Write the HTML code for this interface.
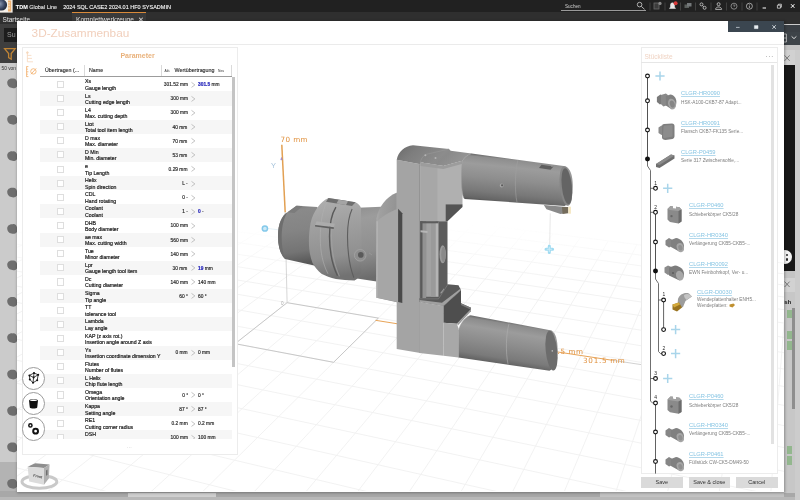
<!DOCTYPE html>
<html lang="de"><head><meta charset="utf-8"><title>TDM Global Line - 3D-Zusammenbau</title>
<style>
html,body{margin:0;padding:0;background:#cbcbcb;}
body{width:800px;height:500px;overflow:hidden;font-family:"Liberation Sans",sans-serif;}
#app{will-change:transform;position:relative;width:800px;height:500px;overflow:hidden;background:#cbcbcb;font-size:6px;color:#222;line-height:1;}
#app div,#app span{position:absolute;box-sizing:border-box;white-space:nowrap;line-height:1;}
#app b{font-weight:bold}
#app svg{position:absolute;overflow:visible}
#topbar{left:0;top:0;width:800px;height:11.8px;background:#212121;}
#tabbar{left:0;top:11.8px;width:800px;height:12.7px;background:#2f2f2f;}
#dlg{left:16.5px;top:21px;width:767px;height:470.5px;background:#fff;box-shadow:0 0 2.5px 0.5px rgba(0,0,0,.3);}
#dlgtitle{left:31.6px;top:27.9px;font-size:11.8px;color:#f1cfbc;}
#wctl{left:728px;top:21px;width:55.5px;height:11px;background:#3b4650;}
#view{left:16.5px;top:43.6px;width:767px;height:447.9px;overflow:hidden;background:#fff;border-top:0.7px solid #ebebeb;}
#lp{left:21.5px;top:46.8px;width:216px;height:408.6px;background:#fff;border:0.7px solid #ececec;}
#tbody{left:40px;top:77.3px;width:192px;height:362.1px;overflow:hidden;}
.row{left:0;width:192px;height:14.12px;-webkit-text-stroke:0.18px #222;}
.row.alt{background:#f6f6f6;}
.row .cb{left:17.3px;top:3.5px;width:7.2px;height:7.1px;border:0.7px solid #dedede;background:#fff;}
.row .arr{left:151.2px;top:4.4px;}
.row b{color:#1d1db8;-webkit-text-stroke:0.18px #1d1db8;}
#vsb{left:232px;top:77.3px;width:2.8px;height:290px;background:#c4c4c4;}
.rbtn{width:23.4px;height:23.4px;border-radius:50%;background:#fff;border:0.7px solid #9c9c9c;}
#rp{left:640.5px;top:47px;width:137px;height:427px;background:#fff;border:0.7px solid #ececec;}
.lnk{text-decoration:underline;text-decoration-thickness:0.5px;text-underline-offset:0.7px;text-decoration-color:#b4d9ec;}
.btn{top:477.2px;height:11.2px;background:#dadada;font-size:5.5px;color:#333;text-align:center;line-height:11px !important;}

</style></head><body>
<div id="app">
<div id="topbar"></div><div id="tabbar"></div><svg style="left:0;top:0" width="13" height="13" viewBox="0 0 13 13"><defs><radialGradient id="glb" cx="0.35" cy="0.4" r="0.7"><stop offset="0" stop-color="#8a97b0"/><stop offset="0.6" stop-color="#3c4864"/><stop offset="1" stop-color="#1c2434"/></radialGradient><clipPath id="lgc"><rect x="0" y="0" width="12.600" height="12.600"/></clipPath></defs><rect x="0" y="0" width="12.600" height="12.600" fill="#f6f1ea"/><g clip-path="url(#lgc)"><circle cx="1.500" cy="5" r="5.600" fill="url(#glb)"/></g><rect x="8" y="0.500" width="3.200" height="11" fill="#eeb070"/><path d="M9 2v1.600M9 4.600v1.600M9 7.200v2" stroke="#f8e0c0" stroke-width="1.400"/></svg><div style="top:4.60px;font-size:5.5px;color:#fff;left:15.80px;-webkit-text-stroke:0.12px #e8e8e8;"><b>TDM</b> <span style="position:static;color:#ddd">Global Line</span>&nbsp;&nbsp;&nbsp;&nbsp;2024 SQL CASE2 2024.01 HF0 SYSADMIN</div><div style="left:72px;top:12.2px;width:74px;height:9px;background:#3a3a3a;border-top:1px solid #d98a3a"></div><div style="top:17.40px;font-size:6.5px;color:#e4e4e4;left:2.60px;">Startseite</div><div style="top:17.40px;font-size:6.6px;color:#e4e4e4;left:76.00px;">Komplettwerkzeuge&nbsp;&nbsp;✕</div><div style="top:4.80px;font-size:4.6px;color:#cfcfcf;left:565.00px;">Suchen</div><div style="left:561px;top:10.2px;width:85px;height:0.7px;background:#9a9a9a"></div><svg style="left:0;top:0" width="800" height="13" viewBox="0 0 800 13" fill="none" stroke="#cfcfcf" stroke-width="0.8">
<circle cx="639.600" cy="4.600" r="2.300"/><path d="M641.300 6.400 L644.600 9.400"/>
<g stroke="#555" stroke-width="0.6"><path d="M650 2.5v8M665 2.5v8M680.5 2.5v8M695.5 2.5v8M711 2.5v8M726.5 2.5v8M742 2.5v8M757 2.5v8"/></g>
<rect x="654" y="3" width="5" height="6" fill="#3c3c3c" stroke="#6a6a6a"/><circle cx="660" cy="3.400" r="1.600" fill="#8a8a8a" stroke="none"/>
<path d="M669.5 8.5h6l-1-1.5v-2.2a2 2 0 0 0-4 0v2.2z" fill="#e8e8e8" stroke="#e8e8e8" stroke-width="0.5"/><circle cx="675.6" cy="3.2" r="2" fill="#d83a3a" stroke="none"/>
<rect x="684.500" y="4.500" width="4.500" height="3.500" fill="#5a5f5c" stroke="none"/><rect x="687" y="3" width="4.500" height="3.500" fill="#74787a" stroke="none"/>
<circle cx="701.5" cy="4.4" r="1.5"/><circle cx="704.6" cy="7.8" r="1.5"/><path d="M702.4 5.5l1.3 1.3"/>
<circle cx="718.6" cy="4.2" r="1.5"/><path d="M715.6 9.4c0-3.2 6-3.2 6 0z"/>
<circle cx="734" cy="6.2" r="3" stroke="#999"/><path d="M734 4.4v2l1.3-1" stroke="#999"/>
<circle cx="749.4" cy="6.2" r="3" stroke="#bbb"/><path d="M749.4 5.6v2.4M749.4 4.2v.6" stroke="#bbb"/>
<path d="M762.6 8h3.4" stroke="#fff" stroke-width="1"/>
<path d="M777.4 5.2h3v3h-3zM778.4 5.2v-1h3v3h-1" stroke="#eee" stroke-width="0.7"/>
<path d="M791 4.2l3.4 3.6M794.4 4.2l-3.4 3.6" stroke="#fff" stroke-width="1"/>
</svg><div style="left:0;top:24px;width:20px;height:38.5px;background:#3e3e3e"></div><div style="left:4px;top:28px;width:16px;height:13.5px;background:#1d1d1d"></div><div style="top:31.40px;font-size:7.0px;color:#9a9a9a;left:7.00px;">Su</div><svg style="left:0;top:0" width="20" height="70" viewBox="0 0 20 70"><path d="M4.6 48.6h10.6l-4 5v5.6l-2.6-1.6v-4z" fill="none" stroke="#c08434" stroke-width="1.300"/></svg><div style="top:67.00px;font-size:4.8px;color:#333;left:1.50px;">50 von</div><div style="left:0;top:462.4px;width:20px;height:38px;background:#b3b3b3"></div><div style="left:0;top:491px;width:800px;height:6px;background:#a8a8a8"></div><div style="left:0;top:496.8px;width:800px;height:4px;background:#b8b8b8"></div><svg style="left:0;top:0" width="20" height="500" viewBox="0 0 20 500"><path d="M7.2 82.8c0-3 3-4.6 5.4-4.2c2.4-.6 4 1.2 4.4 3.2v4.6c-1.4 2-4 2.2-5.6 1.4c-2.6-.4-4.2-2.4-4.2-5z" fill="#6e6e6e"/><path d="M7.2 119.2c0-3 3-4.6 5.4-4.2c2.4-.6 4 1.2 4.4 3.2v4.6c-1.4 2-4 2.2-5.6 1.4c-2.6-.4-4.2-2.4-4.2-5z" fill="#6e6e6e"/><path d="M7.2 155.6c0-3 3-4.6 5.4-4.2c2.4-.6 4 1.2 4.4 3.2v4.6c-1.4 2-4 2.2-5.6 1.4c-2.6-.4-4.2-2.4-4.2-5z" fill="#6e6e6e"/><path d="M7.2 192.0c0-3 3-4.6 5.4-4.2c2.4-.6 4 1.2 4.4 3.2v4.6c-1.4 2-4 2.2-5.6 1.4c-2.6-.4-4.2-2.4-4.2-5z" fill="#6e6e6e"/><path d="M7.2 228.4c0-3 3-4.6 5.4-4.2c2.4-.6 4 1.2 4.4 3.2v4.6c-1.4 2-4 2.2-5.6 1.4c-2.6-.4-4.2-2.4-4.2-5z" fill="#6e6e6e"/><path d="M7.2 264.8c0-3 3-4.6 5.4-4.2c2.4-.6 4 1.2 4.4 3.2v4.6c-1.4 2-4 2.2-5.6 1.4c-2.6-.4-4.2-2.4-4.2-5z" fill="#6e6e6e"/><path d="M7.2 301.2c0-3 3-4.6 5.4-4.2c2.4-.6 4 1.2 4.4 3.2v4.6c-1.4 2-4 2.2-5.6 1.4c-2.6-.4-4.2-2.4-4.2-5z" fill="#6e6e6e"/><path d="M7.2 337.6c0-3 3-4.6 5.4-4.2c2.4-.6 4 1.2 4.4 3.2v4.6c-1.4 2-4 2.2-5.6 1.4c-2.6-.4-4.2-2.4-4.2-5z" fill="#6e6e6e"/><path d="M7.2 374.0c0-3 3-4.6 5.4-4.2c2.4-.6 4 1.2 4.4 3.2v4.6c-1.4 2-4 2.2-5.6 1.4c-2.6-.4-4.2-2.4-4.2-5z" fill="#6e6e6e"/><path d="M7.2 410.4c0-3 3-4.6 5.4-4.2c2.4-.6 4 1.2 4.4 3.2v4.6c-1.4 2-4 2.2-5.6 1.4c-2.6-.4-4.2-2.4-4.2-5z" fill="#6e6e6e"/><path d="M7.2 446.8c0-3 3-4.6 5.4-4.2c2.4-.6 4 1.2 4.4 3.2v4.6c-1.4 2-4 2.2-5.6 1.4c-2.6-.4-4.2-2.4-4.2-5z" fill="#6e6e6e"/><path d="M7.2 483.2c0-3 3-4.6 5.4-4.2c2.4-.6 4 1.2 4.4 3.2v4.6c-1.4 2-4 2.2-5.6 1.4c-2.6-.4-4.2-2.4-4.2-5z" fill="#6e6e6e"/></svg><div style="left:128px;top:493px;width:88px;height:3.5px;background:#cfcfcf"></div><div style="left:600px;top:491.5px;width:184px;height:5.3px;background:#c2c2c2"></div><div style="left:780px;top:24.5px;width:20px;height:21px;background:#3a3f44"></div><div style="left:780px;top:31.5px;width:20px;height:14px;background:#3d4348"></div><div style="left:780px;top:45.4px;width:20px;height:4.4px;background:#c4c4c4"></div><div style="left:780px;top:49.6px;width:20px;height:15.2px;background:#d1d1d1"></div><div style="left:780px;top:64.6px;width:15.3px;height:206.8px;background:#171717"></div><div style="left:795.3px;top:49.6px;width:4.7px;height:451px;background:#cccccc"></div><div style="left:780px;top:271.4px;width:15.3px;height:6.8px;background:#c4c4c4"></div><div style="left:780px;top:278px;width:15.3px;height:13.5px;background:#d2d2d2"></div><div style="left:780px;top:291.5px;width:15.3px;height:201px;background:#c7c7c7"></div><div style="left:778px;top:250px;width:14px;height:14px;border-radius:50%;background:#f4f4f4"></div><div style="left:785.6px;top:253.6px;width:2.4px;height:2.4px;border-radius:50%;background:#2a2a2a"></div><div style="left:785.6px;top:258.2px;width:2.4px;height:2.4px;border-radius:50%;background:#2a2a2a"></div><div style="top:300.00px;font-size:5.6px;color:#111;left:783.00px;font-weight:bold;">ish</div><div style="left:792.4px;top:308px;width:2.8px;height:101px;background:#8e8e8e"></div><div style="left:786.6px;top:309.8px;width:5px;height:8.6px;background:#93b78e"></div><div style="left:786.6px;top:330.7px;width:5px;height:8.6px;background:#93b78e"></div><div style="left:786.6px;top:341px;width:5px;height:8.6px;background:#93b78e"></div><div style="left:786.6px;top:445.6px;width:5px;height:8.6px;background:#93b78e"></div><div style="left:786.6px;top:456px;width:5px;height:8.6px;background:#93b78e"></div><svg style="left:0;top:0" width="800" height="500" viewBox="0 0 800 500" fill="none">
<path d="M784.6 55.4l5 5.4M789.6 55.4l-5 5.4" stroke="#555" stroke-width="0.700"/>
<path d="M784.6 281.6l5 5.4M789.6 281.6l-5 5.4" stroke="#555" stroke-width="0.7"/>
<path d="M791.6 36.4l2.4 2.2l2.4-2.2" stroke="#e6e6e6" stroke-width="0.9"/>
<path d="M783 34h3.4v8H783M783 38h3.4" stroke="#d0d0d0" stroke-width="0.8"/>
</svg>
<div id="dlg"></div>
<div id="dlgtitle">3D-Zusammenbau</div>
<div id="wctl"></div>
<svg style="left:0;top:0" width="800" height="500" viewBox="0 0 800 500" fill="none">
<path d="M736 27.400h3.600" stroke="#c8d0d8" stroke-width="0.800"/>
<path d="M754.400 25.600h3.600v3h-3.600z" fill="#e8eef2" stroke="#e8eef2" stroke-width="0.500"/>
<path d="M772.400 25.200l3.400 3.600M775.800 25.200l-3.400 3.600" stroke="#e8eef2" stroke-width="0.800"/>
</svg>
<div id="view">
<svg style="left:0;top:0.4px" width="767" height="447.5" viewBox="16.5 44.7 767 447.5" fill="none"><defs>
<linearGradient id="fade" x1="0" y1="0" x2="0" y2="500" gradientUnits="userSpaceOnUse"><stop offset="0.45" stop-color="#000"/><stop offset="0.56" stop-color="#fff"/></linearGradient>
<mask id="gm" maskUnits="userSpaceOnUse" x="0" y="0" width="800" height="500"><rect x="0" y="0" width="800" height="500" fill="url(#fade)"/></mask>
<linearGradient id="cylU" gradientUnits="userSpaceOnUse" x1="517.3" y1="157.5" x2="512.7" y2="203.5"><stop offset="0" stop-color="#606060"/><stop offset="0.06" stop-color="#8e8e8e"/><stop offset="0.22" stop-color="#9c9c9c"/><stop offset="0.5" stop-color="#8e8e8e"/><stop offset="0.8" stop-color="#787878"/><stop offset="0.95" stop-color="#666"/><stop offset="1" stop-color="#545454"/></linearGradient>
<linearGradient id="cylL" gradientUnits="userSpaceOnUse" x1="508.6" y1="320.5" x2="501.4" y2="364.5"><stop offset="0" stop-color="#5e5e5e"/><stop offset="0.08" stop-color="#8c8c8c"/><stop offset="0.25" stop-color="#9c9c9c"/><stop offset="0.55" stop-color="#8c8c8c"/><stop offset="0.85" stop-color="#7a7a7a"/><stop offset="1" stop-color="#606060"/></linearGradient>
<linearGradient id="tap" x1="0" y1="0" x2="0.1" y2="1"><stop offset="0" stop-color="#707070"/><stop offset="0.12" stop-color="#8a8a8a"/><stop offset="0.45" stop-color="#848484"/><stop offset="0.8" stop-color="#747474"/><stop offset="1" stop-color="#585858"/></linearGradient>
<linearGradient id="fl" x1="0" y1="0" x2="0.1" y2="1"><stop offset="0" stop-color="#b0b0b0"/><stop offset="0.3" stop-color="#a2a2a2"/><stop offset="0.75" stop-color="#909090"/><stop offset="1" stop-color="#727272"/></linearGradient>
<linearGradient id="b2" x1="0" y1="0" x2="0.1" y2="1"><stop offset="0" stop-color="#8e8e8e"/><stop offset="0.2" stop-color="#9c9c9c"/><stop offset="0.65" stop-color="#8e8e8e"/><stop offset="1" stop-color="#6c6c6c"/></linearGradient>
<linearGradient id="topf" x1="0" y1="0" x2="1" y2="0.3"><stop offset="0" stop-color="#6a6a6a"/><stop offset="0.3" stop-color="#7e7e7e"/><stop offset="0.68" stop-color="#8c8c8c"/><stop offset="0.74" stop-color="#8a8a8a"/><stop offset="1" stop-color="#949494"/></linearGradient>
<linearGradient id="rpl" x1="0" y1="0" x2="1" y2="0.6"><stop offset="0" stop-color="#b4b4b4"/><stop offset="0.2" stop-color="#a0a0a0"/><stop offset="1" stop-color="#8e8e8e"/></linearGradient>
</defs><g mask="url(#gm)"><path d="M99.0 175.8L1228.7 319.6M83.8 182.0L1241.9 333.6M67.9 188.4L1255.8 348.4M51.3 195.2L1270.7 364.3M34.0 202.3L1286.7 381.3M15.8 209.6L1303.9 399.5M-3.2 217.4L1322.3 419.1M-23.1 225.5L1342.2 440.3M-44.0 234.0L1363.7 463.2M-65.9 242.9L1387.1 488.0M-89.1 252.4L1412.6 515.1M-113.4 262.3L1440.5 544.7M-139.1 272.7L1471.1 577.3M-166.3 283.8L1504.8 613.2M-195.1 295.5L1542.3 653.0M-225.5 307.9L1584.1 697.4M-257.9 321.1L1630.9 747.2M-292.4 335.1L1683.9 803.5M-329.1 350.1L1744.3 867.7M-368.3 366.1L1813.8 941.6M-410.4 383.2L1894.5 1027.3M-455.5 401.5L1989.4 1128.2M99.0 175.8L-455.5 401.5M118.1 178.2L-429.6 409.2M137.5 180.7L-403.0 417.1M157.2 183.2L-375.6 425.3M177.3 185.8L-347.3 433.7M197.8 188.4L-318.2 442.3M218.5 191.0L-288.1 451.3M239.7 193.7L-257.0 460.5M261.2 196.4L-224.9 470.1M283.1 199.2L-191.8 479.9M305.4 202.1L-157.5 490.1M328.1 204.9L-122.0 500.7M351.2 207.9L-85.2 511.6M374.7 210.9L-47.1 522.9M398.7 213.9L-7.7 534.6M423.1 217.1L33.3 546.8M448.0 220.2L75.8 559.5M473.4 223.4L119.9 572.6M499.2 226.7L165.8 586.2M525.6 230.1L213.6 600.4M552.5 233.5L263.3 615.2M579.9 237.0L315.1 630.6M607.8 240.6L369.2 646.7M636.4 244.2L425.6 663.4M665.5 247.9L484.5 680.9M695.2 251.7L546.2 699.3M725.6 255.6L610.7 718.5M756.6 259.5L678.4 738.6M788.2 263.5L749.4 759.7M820.6 267.7L824.0 781.8M853.6 271.9L902.4 805.2M887.4 276.2L985.1 829.7M921.9 280.6L1072.2 855.6M957.2 285.1L1164.3 883.0M993.4 289.7L1261.7 911.9M1030.3 294.4L1364.9 942.6M1068.1 299.2L1474.4 975.2M1106.9 304.1L1590.9 1009.8M1146.5 309.2L1715.1 1046.7M1187.1 314.3L1847.6 1086.1M1228.7 319.6L1989.4 1128.2" stroke="#f1f1f1" stroke-width="0.9"/></g><path d="M286.6 302.4L377.9 317.8L333.1 362.0L234.6 343.4Z" stroke="#b4b4b4" stroke-width="0.7"/><path d="M284.5 212L286.6 302.4" stroke="#c4c4c4" stroke-width="0.7"/><path d="M281.300 144.500L284.700 212" stroke="#e2a052" stroke-width="1.500"/><path d="M375 320L397 323.5" stroke="#e8a458" stroke-width="1"/><path d="M556 351.5L612 360" stroke="#e8a458" stroke-width="1"/><path d="M612 360L642 364.5" stroke="#bdbdbd" stroke-width="0.7"/><path d="M549.800 213L549.200 244" stroke="#dcdcdc" stroke-width="0.700"/><path d="M266 228L278 229.5" stroke="#dcecf4" stroke-width="0.7"/><path d="M545.5 249h6.600M548.8 245.7v6.600" stroke="#9edaf1" stroke-width="3" stroke-linecap="round"/><path d="M546.1999999999999 249h5.200M548.8 246.4v5.200" stroke="#c9ecf8" stroke-width="1.100"/><circle cx="264.400" cy="228.200" r="2.600" fill="#cdeaf7" stroke="#84c9ea" stroke-width="1.500"/><path d="M280.200 159.500l0.800 -2.400l0.800 2.400z" fill="#9a86c8" stroke="#9a86c8" stroke-width="0.500"/><text x="280" y="141.8" font-size="7.2" fill="#e0903c" font-family="DejaVu Sans, sans-serif" letter-spacing="0.4">70 mm</text><text x="270.5" y="168" font-size="7.400" fill="#a4c2da" font-family="Liberation Sans, sans-serif">Y</text><text x="280.5" y="305" font-size="4.6" fill="#aaa" font-family="Liberation Sans, sans-serif">0</text><text x="557" y="354.2" font-size="7.2" fill="#e0903c" font-family="DejaVu Sans, sans-serif" letter-spacing="0.6">.5 mm</text><text x="582.6" y="362.5" font-size="7.2" fill="#e0903c" font-family="DejaVu Sans, sans-serif" letter-spacing="0.7">301.5 mm</text>
<g id="model">
<!-- left taper -->
<path d="M287 212 L296 205.400 L317 206.600 L317 266 L284.500 258.800 C280 254 277.300 246 277.500 235 C277.700 224 281 215.500 287 212Z" fill="url(#tap)"/>
<path d="M287 212 C281 215.500 277.700 224 277.500 235 C277.300 246 280 254 284.500 258.800 C282 251 281 243 281.200 235 C281.400 226 283.500 217 287 212Z" fill="#6e6e6e"/>
<path d="M287 212 L296 205.400 L302 205.800 L294 212.600Z" fill="#7c7c7c"/>
<!-- body 2 behind flange -->
<path d="M345 208 L381 206.400 L381 282 L345 276.500Z" fill="url(#b2)"/>
<!-- flange -->
<path d="M328 197.800 L355 202 C358 203.600 360 205.500 360.500 208 L361 270 C360 275 357.600 278.600 354 280.200 L344.400 279.700 L335.400 278.800 C330 277.500 325 275.500 321 273.400 C317 270 314 266.500 312 262.600 C309.500 256 308.400 249 308.400 241 C308.400 235 309 229 310 223 C311.500 216.500 314 211 317.400 206.800 C320 203 324 199.500 328 197.800Z" fill="url(#fl)"/>
<path d="M328 197.800 L355 202 L351.500 205.600 L325.500 201.400Z" fill="#6e6e6e"/>
<path d="M338 199.400 L347.500 200.900 L345.500 204.700 L336 203.200Z" fill="#a4a4a4"/>
<path d="M326.500 201.600 C322 210 319.800 222 319.800 238 C319.800 252 322.500 264 327.500 273.500" stroke="#b0b0b0" stroke-width="0.600" fill="none"/>
<path d="M335.400 206.800 C331 214 329 224 329 236 C329 250 331.500 264 337 275.500" stroke="#5a5a5a" stroke-width="1.400" fill="none"/>
<path d="M337.400 207 C333 214 331 224 331 236 C331 250 333.500 264 339 276" stroke="#a8a8a8" stroke-width="0.600" fill="none"/>
<path d="M351.600 208.600 C348.500 215 347 224 347 236 C347 250 349 266 353.400 277.500" stroke="#5e5e5e" stroke-width="1.100" fill="none"/>
<path d="M314.700 224.600 L333.400 227 L334.400 223.400 L316 221Z" fill="#acacac"/>
<path d="M314.700 224.600 L333.400 227 L333.200 228.600 L314.500 226.200Z" fill="#606060"/>
<circle cx="359.700" cy="255" r="5.800" fill="#8e8e8e" stroke="#a4a4a4" stroke-width="0.800"/>
<circle cx="360.300" cy="254.600" r="2.800" fill="#5a5a5a"/>
<path d="M368.500 252.500l3 2.200" stroke="#a0a0a0" stroke-width="0.600"/>
<!-- back plate -->
<path d="M396.200 159.400 L419.800 163.900 L419.800 352.600 L396.200 348.800Z" fill="#a4a4a4"/>
<path d="M419.600 163.900 V352.600" stroke="#747474" stroke-width="0.800"/>
<!-- rounded flange plate -->
<path d="M376 218 C378 207 385.500 196.500 396 192.500 L396.400 192.500 L396.400 302 L376 297.500Z" fill="url(#rpl)"/>
<path d="M376.600 221 C380 217 390 211 397.600 208.500 L397.600 301.800 L376 297.500Z" fill="#a6a6a6"/>
<path d="M376.600 221 L376.300 297.500" stroke="#b8b8b8" stroke-width="1.200"/>
<path d="M397.600 208.500 L401.800 213 L401.800 302.600 L397.600 301.800Z" fill="#4a4a4a"/>
<!-- top dark surface -->
<path d="M396.200 159.400 C398 151 404 146 412.500 145 L448.500 148.700 L450.200 150.400 L471 153.200 Q464 156 462 160.500 L442.900 165.600 L421 162.200 L419.800 163.900Z" fill="url(#topf)"/>
<path d="M419.800 163.900 C420 159 422 155.500 426 154 L448.500 148.700" stroke="#999" stroke-width="0.600" fill="none"/>
<circle cx="424.900" cy="154.900" r="1" fill="#b4b4b4"/><circle cx="435" cy="157.600" r="1" fill="#b4b4b4"/>
<!-- front block upper arm -->
<path d="M420 162.200 L442.900 165.600 L462 160.500 L462 204 L445 204 L445 221 L420 221Z" fill="#b0b0b0"/>
<path d="M420 162.200 L437 164.700 L437 221 L420 221Z" fill="#a7a7a7"/>
<path d="M420 162.200 L442.900 165.600 L462 160.500 L462 163.500 L442.900 168.800 L420 165.600Z" fill="#9c9c9c"/>
<path d="M445 204 L462 204 L462 206.700 L447 221 L445 221Z" fill="#545454"/>
<!-- channel -->
<path d="M419.800 221 L447 221 L447 300 L419.800 300Z" fill="#5c5c5c"/>
<path d="M419.800 221 L422 221 L422 300 L419.800 300Z" fill="#5a5a5a"/>
<path d="M422 222 L425.600 222 L425.600 298 L422 298Z" fill="#929292"/>
<path d="M425.600 221 L435 221 L435 296.500 L425.600 296.500Z" fill="#a2a2a2"/>
<path d="M430.500 221 L435 221 L435 296.500 L430.500 296.500Z" fill="#9a9a9a"/>
<path d="M435 221.500 L438 221.500 L438 296.500 L435 296.500Z" fill="#b4b4b4"/>
<path d="M419.800 221 L438 221 L438 223 L419.800 223Z" fill="#5c5c5c"/>
<path d="M420 230 L427 230.600 L427 232.600 L420 232Z" fill="#b6b6b6"/>
<ellipse cx="442.200" cy="254" rx="3.200" ry="9" fill="#9c9c9c"/><ellipse cx="442.900" cy="254" rx="2.200" ry="7.600" fill="#8a8a8a"/>
<path d="M439.500 293 L443.500 288 L443.500 293.500Z" fill="#9a9a9a"/>
<!-- lower block -->
<path d="M419 298 L438 298 L447 284 L458 285 L460.500 290 L443 305.600 L419 301.600Z" fill="#595959"/>
<path d="M419 298.600 L438 298.600 L447 284.600" stroke="#888" stroke-width="0.600" fill="none"/>
<path d="M419 299.600 L441.500 302.400 L460.500 288 L460.500 290 L443 305.600 L419 301.600Z" fill="#a0a0a0"/>
<path d="M418.800 301.600 L443 305.600 L443 355.400 L418.800 352.600Z" fill="#a6a6a6"/>
<path d="M443 305.600 L460.500 290 L460.500 303 L470.500 307.500 L470.500 309 L456.400 323.500 L443 322.400Z" fill="#4e4e4e"/>
<path d="M460.500 303 L470.500 307.500 L470.500 309.400 L460.500 304.800Z" fill="#7a7a7a"/>
<path d="M456.400 323.500 L470.500 309 L470.500 311 L457.600 325Z" fill="#9a9a9a"/>
<path d="M443 322.400 L456.400 323.500 L458 328 L458 357.200 L443 355.400Z" fill="#a8a8a8"/>
<!-- upper cylinder -->
<path d="M471 153.200 L565 166 C570 168 572.500 176 572.200 186 C572 196 569 204 564 205.600 L464 198.600 C461.500 196 461 185 461 178 C461 170 461.500 163 462 160.500 Q464 156 471 153.200Z" fill="url(#cylU)"/>
<path d="M471 153.200 Q464 156 462 160.500 C461.500 163 461 170 461 178 C461 185 461.500 196 464 198.600" stroke="#9a9a9a" stroke-width="0.600" fill="none"/>
<ellipse cx="565.400" cy="185.800" rx="6.200" ry="19.800" fill="#858585" transform="rotate(-6 565.400 185.800)"/><ellipse cx="566.300" cy="185.900" rx="5" ry="18" fill="#646464" transform="rotate(-6 566.300 185.900)"/>
<path d="M517.500 159.600 C514.500 170 514 190 516.500 202" stroke="#a0a0a0" stroke-width="0.600"/>
<circle cx="501.200" cy="185.200" r="1.900" fill="#a6a6a6"/><circle cx="501.600" cy="185" r="1.100" fill="#5c5c5c"/>
<path d="M541 164.500 L553 166.200 L550 169.400 L538.500 167.800Z" fill="#5e5e5e"/><circle cx="551.500" cy="165.600" r="0.900" fill="#999"/>
<!-- insert holder -->
<path d="M543.300 204.800 L566 206.600 L566.500 212.400 L560 213.800 L546 209Z" fill="#8a8a8a"/>
<path d="M561.500 206.600 L567.800 206.800 L567.800 213 L562 213.800Z" fill="#746c5c"/>
<path d="M567.800 206.400 L570.400 206.400 L570.400 213.400 L567.800 213.400Z" fill="#f4e6c0"/>
<!-- lower cylinder -->
<path d="M470 315 L551 330.200 C555.500 333 557.400 341 557 351 C556.600 361 553.500 368.500 549 370.400 L458 357.200 L458 330 C460 323 464 317.500 470 315Z" fill="url(#cylL)"/>
<path d="M470 315 C464 317.500 460 323 458 330 L458 357" stroke="#9c9c9c" stroke-width="0.500" fill="none"/>
<ellipse cx="551" cy="350.400" rx="5.800" ry="20" fill="#6c6c6c" transform="rotate(-6 551 350.400)"/>
<path d="M508.500 323.500 C505.500 334 505 352 507.500 363.600" stroke="#b0b0b0" stroke-width="0.600"/>
<circle cx="551.800" cy="350.600" r="0.800" fill="#bbb"/>
</g>
</svg>
</div>
<div id="lp"></div>
<div style="top:52.20px;font-size:7.0px;color:#e9b27c;left:120.40px;font-weight:bold;">Parameter</div>
<svg style="left:0;top:0" width="800" height="500" viewBox="0 0 800 500" fill="none">
<g stroke="#f6d8bc" stroke-width="0.8"><path d="M27.4 52.4v9.4h5.6M27.4 55.4h4M27.4 58.4h4.6"/><circle cx="27.4" cy="52.6" r="0.9" fill="#f6d8bc"/></g>
<g stroke="#f2ad68" stroke-width="0.800"><path d="M26.6 66.4v10.4M26.6 66.6h1.8M26.6 69.2h1.2M26.6 71.8h1.8M26.6 74.2h1.2M26.6 76.6h1.8"/><circle cx="33.4" cy="71.4" r="2.7"/><path d="M31 74.2l5.2-5.8"/></g>
</svg>
<div style="left:40px;top:76.1px;width:192px;height:0.8px;background:#9c9c9c"></div><div style="left:84.3px;top:64.6px;width:0.6px;height:11.6px;background:#dadada"></div><div style="left:160.8px;top:64.6px;width:0.6px;height:11.6px;background:#dadada"></div><div style="left:231px;top:64.6px;width:0.6px;height:11.6px;background:#dadada"></div><div style="top:67.90px;font-size:5.3px;color:#222;left:45.00px;-webkit-text-stroke:0.12px #333;">Übertragen (...</div><div style="top:67.90px;font-size:5.3px;color:#222;left:89.00px;-webkit-text-stroke:0.12px #333;">Name</div><div style="top:70.30px;font-size:3.3px;color:#333;left:164.60px;">Akt.</div><div style="top:67.60px;font-size:5.35px;color:#222;left:174.50px;-webkit-text-stroke:0.12px #333;">Wertübertragung</div><div style="top:70.30px;font-size:3.3px;color:#333;left:218.00px;">Neu</div>
<div id="tbody">
<div class="row" style="top:0.00px"><span class="cb"></span><div style="top:2.10px;font-size:5.2px;color:#101010;left:45.00px;">Xs</div><div style="top:8.50px;font-size:5.2px;color:#101010;left:45.00px;">Gauge length</div><div style="top:4.90px;font-size:5.0px;color:#333;right:44.30px;transform:scaleX(0.97);transform-origin:100% 50%;">301.52 mm</div><svg class="arr" width="5" height="6" viewBox="0 0 5 6"><path d="M0.500 0.400L3.900 2.900L0.500 5.400" fill="none" stroke="#b4b4b4" stroke-width="0.800"/></svg><div style="top:4.90px;font-size:5.0px;color:#333;left:157.70px;transform:scaleX(0.97);transform-origin:0 50%;"><b>301.5</b> mm</div></div>
<div class="row alt" style="top:14.12px"><span class="cb"></span><div style="top:2.10px;font-size:5.2px;color:#101010;left:45.00px;">Ls</div><div style="top:8.50px;font-size:5.2px;color:#101010;left:45.00px;">Cutting edge length</div><div style="top:4.90px;font-size:5.0px;color:#333;right:44.30px;transform:scaleX(0.97);transform-origin:100% 50%;">300 mm</div><svg class="arr" width="5" height="6" viewBox="0 0 5 6"><path d="M0.500 0.400L3.900 2.900L0.500 5.400" fill="none" stroke="#b4b4b4" stroke-width="0.800"/></svg></div>
<div class="row" style="top:28.24px"><span class="cb"></span><div style="top:2.10px;font-size:5.2px;color:#101010;left:45.00px;">L4</div><div style="top:8.50px;font-size:5.2px;color:#101010;left:45.00px;">Max. cutting depth</div><div style="top:4.90px;font-size:5.0px;color:#333;right:44.30px;transform:scaleX(0.97);transform-origin:100% 50%;">300 mm</div><svg class="arr" width="5" height="6" viewBox="0 0 5 6"><path d="M0.500 0.400L3.900 2.900L0.500 5.400" fill="none" stroke="#b4b4b4" stroke-width="0.800"/></svg></div>
<div class="row alt" style="top:42.36px"><span class="cb"></span><div style="top:2.10px;font-size:5.2px;color:#101010;left:45.00px;">Ltot</div><div style="top:8.50px;font-size:5.2px;color:#101010;left:45.00px;">Total tool item length</div><div style="top:4.90px;font-size:5.0px;color:#333;right:44.30px;transform:scaleX(0.97);transform-origin:100% 50%;">40 mm</div><svg class="arr" width="5" height="6" viewBox="0 0 5 6"><path d="M0.500 0.400L3.900 2.900L0.500 5.400" fill="none" stroke="#b4b4b4" stroke-width="0.800"/></svg></div>
<div class="row" style="top:56.48px"><span class="cb"></span><div style="top:2.10px;font-size:5.2px;color:#101010;left:45.00px;">D max</div><div style="top:8.50px;font-size:5.2px;color:#101010;left:45.00px;">Max. diameter</div><div style="top:4.90px;font-size:5.0px;color:#333;right:44.30px;transform:scaleX(0.97);transform-origin:100% 50%;">70 mm</div><svg class="arr" width="5" height="6" viewBox="0 0 5 6"><path d="M0.500 0.400L3.900 2.900L0.500 5.400" fill="none" stroke="#b4b4b4" stroke-width="0.800"/></svg></div>
<div class="row alt" style="top:70.60px"><span class="cb"></span><div style="top:2.10px;font-size:5.2px;color:#101010;left:45.00px;">D Min</div><div style="top:8.50px;font-size:5.2px;color:#101010;left:45.00px;">Min. diameter</div><div style="top:4.90px;font-size:5.0px;color:#333;right:44.30px;transform:scaleX(0.97);transform-origin:100% 50%;">53 mm</div><svg class="arr" width="5" height="6" viewBox="0 0 5 6"><path d="M0.500 0.400L3.900 2.900L0.500 5.400" fill="none" stroke="#b4b4b4" stroke-width="0.800"/></svg></div>
<div class="row" style="top:84.72px"><span class="cb"></span><div style="top:2.10px;font-size:5.2px;color:#101010;left:45.00px;">e</div><div style="top:8.50px;font-size:5.2px;color:#101010;left:45.00px;">Tip Length</div><div style="top:4.90px;font-size:5.0px;color:#333;right:44.30px;transform:scaleX(0.97);transform-origin:100% 50%;">0.29 mm</div><svg class="arr" width="5" height="6" viewBox="0 0 5 6"><path d="M0.500 0.400L3.900 2.900L0.500 5.400" fill="none" stroke="#b4b4b4" stroke-width="0.800"/></svg></div>
<div class="row alt" style="top:98.84px"><span class="cb"></span><div style="top:2.10px;font-size:5.2px;color:#101010;left:45.00px;">Helix</div><div style="top:8.50px;font-size:5.2px;color:#101010;left:45.00px;">Spin direction</div><div style="top:4.90px;font-size:5.0px;color:#333;right:44.30px;transform:scaleX(0.97);transform-origin:100% 50%;">L -</div><svg class="arr" width="5" height="6" viewBox="0 0 5 6"><path d="M0.500 0.400L3.900 2.900L0.500 5.400" fill="none" stroke="#b4b4b4" stroke-width="0.800"/></svg></div>
<div class="row" style="top:112.96px"><span class="cb"></span><div style="top:2.10px;font-size:5.2px;color:#101010;left:45.00px;">CDL</div><div style="top:8.50px;font-size:5.2px;color:#101010;left:45.00px;">Hand rotating</div><div style="top:4.90px;font-size:5.0px;color:#333;right:44.30px;transform:scaleX(0.97);transform-origin:100% 50%;">0 -</div><svg class="arr" width="5" height="6" viewBox="0 0 5 6"><path d="M0.500 0.400L3.900 2.900L0.500 5.400" fill="none" stroke="#b4b4b4" stroke-width="0.800"/></svg></div>
<div class="row alt" style="top:127.08px"><span class="cb"></span><div style="top:2.10px;font-size:5.2px;color:#101010;left:45.00px;">Coolant</div><div style="top:8.50px;font-size:5.2px;color:#101010;left:45.00px;">Coolant</div><div style="top:4.90px;font-size:5.0px;color:#333;right:44.30px;transform:scaleX(0.97);transform-origin:100% 50%;">1 -</div><svg class="arr" width="5" height="6" viewBox="0 0 5 6"><path d="M0.500 0.400L3.900 2.900L0.500 5.400" fill="none" stroke="#b4b4b4" stroke-width="0.800"/></svg><div style="top:4.90px;font-size:5.0px;color:#333;left:157.70px;transform:scaleX(0.97);transform-origin:0 50%;"><b>0</b> -</div></div>
<div class="row" style="top:141.20px"><span class="cb"></span><div style="top:2.10px;font-size:5.2px;color:#101010;left:45.00px;">DHB</div><div style="top:8.50px;font-size:5.2px;color:#101010;left:45.00px;">Body diameter</div><div style="top:4.90px;font-size:5.0px;color:#333;right:44.30px;transform:scaleX(0.97);transform-origin:100% 50%;">100 mm</div><svg class="arr" width="5" height="6" viewBox="0 0 5 6"><path d="M0.500 0.400L3.900 2.900L0.500 5.400" fill="none" stroke="#b4b4b4" stroke-width="0.800"/></svg></div>
<div class="row alt" style="top:155.32px"><span class="cb"></span><div style="top:2.10px;font-size:5.2px;color:#101010;left:45.00px;">ae max</div><div style="top:8.50px;font-size:5.2px;color:#101010;left:45.00px;">Max. cutting width</div><div style="top:4.90px;font-size:5.0px;color:#333;right:44.30px;transform:scaleX(0.97);transform-origin:100% 50%;">560 mm</div><svg class="arr" width="5" height="6" viewBox="0 0 5 6"><path d="M0.500 0.400L3.900 2.900L0.500 5.400" fill="none" stroke="#b4b4b4" stroke-width="0.800"/></svg></div>
<div class="row" style="top:169.44px"><span class="cb"></span><div style="top:2.10px;font-size:5.2px;color:#101010;left:45.00px;">Tue</div><div style="top:8.50px;font-size:5.2px;color:#101010;left:45.00px;">Minor diameter</div><div style="top:4.90px;font-size:5.0px;color:#333;right:44.30px;transform:scaleX(0.97);transform-origin:100% 50%;">140 mm</div><svg class="arr" width="5" height="6" viewBox="0 0 5 6"><path d="M0.500 0.400L3.900 2.900L0.500 5.400" fill="none" stroke="#b4b4b4" stroke-width="0.800"/></svg></div>
<div class="row alt" style="top:183.56px"><span class="cb"></span><div style="top:2.10px;font-size:5.2px;color:#101010;left:45.00px;">Lpr</div><div style="top:8.50px;font-size:5.2px;color:#101010;left:45.00px;">Gauge length tool item</div><div style="top:4.90px;font-size:5.0px;color:#333;right:44.30px;transform:scaleX(0.97);transform-origin:100% 50%;">30 mm</div><svg class="arr" width="5" height="6" viewBox="0 0 5 6"><path d="M0.500 0.400L3.900 2.900L0.500 5.400" fill="none" stroke="#b4b4b4" stroke-width="0.800"/></svg><div style="top:4.90px;font-size:5.0px;color:#333;left:157.70px;transform:scaleX(0.97);transform-origin:0 50%;"><b>19</b> mm</div></div>
<div class="row" style="top:197.68px"><span class="cb"></span><div style="top:2.10px;font-size:5.2px;color:#101010;left:45.00px;">Dc</div><div style="top:8.50px;font-size:5.2px;color:#101010;left:45.00px;">Cutting diameter</div><div style="top:4.90px;font-size:5.0px;color:#333;right:44.30px;transform:scaleX(0.97);transform-origin:100% 50%;">140 mm</div><svg class="arr" width="5" height="6" viewBox="0 0 5 6"><path d="M0.500 0.400L3.900 2.900L0.500 5.400" fill="none" stroke="#b4b4b4" stroke-width="0.800"/></svg><div style="top:4.90px;font-size:5.0px;color:#333;left:157.70px;transform:scaleX(0.97);transform-origin:0 50%;">140 mm</div></div>
<div class="row alt" style="top:211.80px"><span class="cb"></span><div style="top:2.10px;font-size:5.2px;color:#101010;left:45.00px;">Sigma</div><div style="top:8.50px;font-size:5.2px;color:#101010;left:45.00px;">Tip angle</div><div style="top:4.90px;font-size:5.0px;color:#333;right:44.30px;transform:scaleX(0.97);transform-origin:100% 50%;">60 °</div><svg class="arr" width="5" height="6" viewBox="0 0 5 6"><path d="M0.500 0.400L3.900 2.900L0.500 5.400" fill="none" stroke="#b4b4b4" stroke-width="0.800"/></svg><div style="top:4.90px;font-size:5.0px;color:#333;left:157.70px;transform:scaleX(0.97);transform-origin:0 50%;">60 °</div></div>
<div class="row" style="top:225.92px"><span class="cb"></span><div style="top:2.10px;font-size:5.2px;color:#101010;left:45.00px;">TT</div><div style="top:8.50px;font-size:5.2px;color:#101010;left:45.00px;">tolerance tool</div></div>
<div class="row alt" style="top:240.04px"><span class="cb"></span><div style="top:2.10px;font-size:5.2px;color:#101010;left:45.00px;">Lambda</div><div style="top:8.50px;font-size:5.2px;color:#101010;left:45.00px;">Lay angle</div></div>
<div class="row" style="top:254.16px"><span class="cb"></span><div style="top:2.10px;font-size:5.2px;color:#101010;left:45.00px;">KAP (z axis rot.)</div><div style="top:8.50px;font-size:5.2px;color:#101010;left:45.00px;">Insertion angle around Z axis</div></div>
<div class="row alt" style="top:268.28px"><span class="cb"></span><div style="top:2.10px;font-size:5.2px;color:#101010;left:45.00px;">Ys</div><div style="top:8.50px;font-size:5.2px;color:#101010;left:45.00px;">Insertion coordinate dimension Y</div><div style="top:4.90px;font-size:5.0px;color:#333;right:44.30px;transform:scaleX(0.97);transform-origin:100% 50%;">0 mm</div><svg class="arr" width="5" height="6" viewBox="0 0 5 6"><path d="M0.500 0.400L3.900 2.900L0.500 5.400" fill="none" stroke="#b4b4b4" stroke-width="0.800"/></svg><div style="top:4.90px;font-size:5.0px;color:#333;left:157.70px;transform:scaleX(0.97);transform-origin:0 50%;">0 mm</div></div>
<div class="row" style="top:282.40px"><span class="cb"></span><div style="top:2.10px;font-size:5.2px;color:#101010;left:45.00px;">Flutes</div><div style="top:8.50px;font-size:5.2px;color:#101010;left:45.00px;">Number of flutes</div></div>
<div class="row alt" style="top:296.52px"><span class="cb"></span><div style="top:2.10px;font-size:5.2px;color:#101010;left:45.00px;">L Helix</div><div style="top:8.50px;font-size:5.2px;color:#101010;left:45.00px;">Chip flute length</div></div>
<div class="row" style="top:310.64px"><span class="cb"></span><div style="top:2.10px;font-size:5.2px;color:#101010;left:45.00px;">Omega</div><div style="top:8.50px;font-size:5.2px;color:#101010;left:45.00px;">Orientation angle</div><div style="top:4.90px;font-size:5.0px;color:#333;right:44.30px;transform:scaleX(0.97);transform-origin:100% 50%;">0 °</div><svg class="arr" width="5" height="6" viewBox="0 0 5 6"><path d="M0.500 0.400L3.900 2.900L0.500 5.400" fill="none" stroke="#b4b4b4" stroke-width="0.800"/></svg><div style="top:4.90px;font-size:5.0px;color:#333;left:157.70px;transform:scaleX(0.97);transform-origin:0 50%;">0 °</div></div>
<div class="row alt" style="top:324.76px"><span class="cb"></span><div style="top:2.10px;font-size:5.2px;color:#101010;left:45.00px;">Kappa</div><div style="top:8.50px;font-size:5.2px;color:#101010;left:45.00px;">Setting angle</div><div style="top:4.90px;font-size:5.0px;color:#333;right:44.30px;transform:scaleX(0.97);transform-origin:100% 50%;">87 °</div><svg class="arr" width="5" height="6" viewBox="0 0 5 6"><path d="M0.500 0.400L3.900 2.900L0.500 5.400" fill="none" stroke="#b4b4b4" stroke-width="0.800"/></svg><div style="top:4.90px;font-size:5.0px;color:#333;left:157.70px;transform:scaleX(0.97);transform-origin:0 50%;">87 °</div></div>
<div class="row" style="top:338.88px"><span class="cb"></span><div style="top:2.10px;font-size:5.2px;color:#101010;left:45.00px;">RE1</div><div style="top:8.50px;font-size:5.2px;color:#101010;left:45.00px;">Cutting corner radius</div><div style="top:4.90px;font-size:5.0px;color:#333;right:44.30px;transform:scaleX(0.97);transform-origin:100% 50%;">0.2 mm</div><svg class="arr" width="5" height="6" viewBox="0 0 5 6"><path d="M0.500 0.400L3.900 2.900L0.500 5.400" fill="none" stroke="#b4b4b4" stroke-width="0.800"/></svg><div style="top:4.90px;font-size:5.0px;color:#333;left:157.70px;transform:scaleX(0.97);transform-origin:0 50%;">0.2 mm</div></div>
<div class="row alt" style="top:353.00px"><span class="cb"></span><div style="top:2.10px;font-size:5.2px;color:#101010;left:45.00px;">DSH</div><div style="top:8.50px;font-size:5.2px;color:#101010;left:45.00px;">Shank diameter</div><div style="top:4.90px;font-size:5.0px;color:#333;right:44.30px;transform:scaleX(0.97);transform-origin:100% 50%;">100 mm</div><svg class="arr" width="5" height="6" viewBox="0 0 5 6"><path d="M0.500 0.400L3.900 2.900L0.500 5.400" fill="none" stroke="#b4b4b4" stroke-width="0.800"/></svg><div style="top:4.90px;font-size:5.0px;color:#333;left:157.70px;transform:scaleX(0.97);transform-origin:0 50%;">100 mm</div></div>
</div>
<div id="vsb"></div>
<div style="top:443.60px;font-size:5.5px;color:#bdbdbd;left:126.60px;letter-spacing:0.3px;">...</div>
<div class="rbtn" style="left:21.8px;top:366.9px"></div><div class="rbtn" style="left:21.8px;top:392.1px"></div><div class="rbtn" style="left:21.8px;top:417.3px"></div><svg style="left:0;top:0" width="800" height="500" viewBox="0 0 800 500" fill="none" stroke="#111">
<g stroke-width="0.8"><path d="M29.4 375.4l4.6-2.4l4.2 1.8l-1 5.4l-4.2 2.6l-3.2-3.4z"/><path d="M29.4 375.4l4.2 2l4.6-2.6M33.6 377.4l-.6 5.4M34 373l-.4 4.4"/></g>
<g fill="#111" stroke="none"><circle cx="29.4" cy="375.4" r="1"/><circle cx="34" cy="373" r="1"/><circle cx="38.2" cy="374.8" r="1"/><circle cx="37.2" cy="380.2" r="1"/><circle cx="33" cy="382.8" r="1"/><circle cx="29.8" cy="379.4" r="1"/><circle cx="33.6" cy="377.4" r="1"/></g>
<path d="M29 400.4c0-1.6 9-1.6 9 0l-.8 7c-.4 1.4-7 1.4-7.400 0z" fill="#111" stroke="none"/><ellipse cx="33.5" cy="400.2" rx="3.6" ry="0.8" fill="#fff" stroke="none"/>
<circle cx="30.4" cy="425.4" r="1.6" stroke-width="1.5"/><circle cx="35.6" cy="431.2" r="2.4" stroke-width="2"/>
</svg>
<svg style="left:0;top:0" width="800" height="500" viewBox="0 0 800 500" fill="none">
<ellipse cx="39.400" cy="481.800" rx="17.400" ry="6.400" stroke="#c9c9c9" stroke-width="3"/>
<path d="M27.600 466.800L35.200 463.200L49.600 464.400L44 468z" fill="#8e8e8e"/>
<path d="M27.600 466.800L44 468L44 484.800L29.200 481.600z" fill="#dcdcdc"/>
<path d="M44 468L49.600 464.400L48.800 478.400L44 484.800z" fill="#b0b0b0"/>
<path d="M46 470.500l1.500-1v5l-1.500 1.400z" fill="#6e6e6e"/>
<text x="33" y="476.600" font-size="3.600" font-weight="bold" fill="#444" font-family="Liberation Sans, sans-serif" transform="rotate(12 33 476.600)">Front</text>
</svg>
<div id="rp"></div>
<div style="top:54.00px;font-size:6.55px;color:#f0d4c4;left:644.50px;">Stückliste</div><div style="top:51.00px;font-size:7px;color:#8c8c8c;left:765.60px;letter-spacing:0.9px;">...</div><div style="left:641.2px;top:61.8px;width:135.6px;height:0.7px;background:#e6e6e6"></div><div style="left:771px;top:64.5px;width:2.8px;height:379px;background:#e2e2e2"></div><svg style="left:0;top:0" width="800" height="500" viewBox="0 0 800 500" fill="none"><path d="M647.500 76V166L650.500 170.500V401L652.500 403H655.500" stroke="#4a4a4a" stroke-width="0.800"/><path d="M647.500 76V159" stroke="#505050" stroke-width="0.900"/><path d="M650.500 188.300H655.500M650.500 212.300H655.500M650.500 378.500H655.500" stroke="#4a4a4a" stroke-width="0.800"/><path d="M655.500 212.300V279L658.500 283.500V351.500L660.500 353.600H663.600" stroke="#4a4a4a" stroke-width="0.800"/><path d="M655.500 212.300V271" stroke="#505050" stroke-width="0.900"/><path d="M658.500 300H663.600" stroke="#4a4a4a" stroke-width="0.800"/><path d="M663.600 300V329.600" stroke="#505050" stroke-width="0.900"/><path d="M655.500 403V473.600" stroke="#505050" stroke-width="0.900"/><circle cx="647.5" cy="76" r="1.900" fill="#fff" stroke="#111" stroke-width="1.100"/><circle cx="647.5" cy="100.8" r="1.900" fill="#fff" stroke="#111" stroke-width="1.100"/><circle cx="647.5" cy="130" r="1.900" fill="#fff" stroke="#111" stroke-width="1.100"/><circle cx="647.5" cy="159" r="1.900" fill="#111" stroke="#111" stroke-width="1.100"/><circle cx="655.5" cy="188.3" r="1.900" fill="#fff" stroke="#111" stroke-width="1.100"/><circle cx="655.5" cy="212.3" r="1.900" fill="#fff" stroke="#111" stroke-width="1.100"/><circle cx="655.5" cy="242" r="1.900" fill="#fff" stroke="#111" stroke-width="1.100"/><circle cx="655.5" cy="271" r="1.900" fill="#111" stroke="#111" stroke-width="1.100"/><circle cx="663.6" cy="300" r="1.900" fill="#fff" stroke="#111" stroke-width="1.100"/><circle cx="663.6" cy="329.6" r="1.900" fill="#fff" stroke="#111" stroke-width="1.100"/><circle cx="663.6" cy="353.6" r="1.900" fill="#fff" stroke="#111" stroke-width="1.100"/><circle cx="655.5" cy="378.5" r="1.900" fill="#fff" stroke="#111" stroke-width="1.100"/><circle cx="655.5" cy="403" r="1.900" fill="#fff" stroke="#111" stroke-width="1.100"/><circle cx="655.5" cy="432" r="1.900" fill="#fff" stroke="#111" stroke-width="1.100"/><circle cx="655.5" cy="461.5" r="1.900" fill="#fff" stroke="#111" stroke-width="1.100"/><path d="M655.4 76h9.2M660 71.4v9.2" stroke="#a9d5ea" stroke-width="1.500"/><path d="M663.1 188.3h9.2M667.7 183.70000000000002v9.2" stroke="#a9d5ea" stroke-width="1.500"/><path d="M671.0 329.6h9.2M675.6 325.0v9.2" stroke="#a9d5ea" stroke-width="1.500"/><path d="M671.0 353.6h9.2M675.6 349.0v9.2" stroke="#a9d5ea" stroke-width="1.500"/><path d="M663.1 378.5h9.2M667.7 373.9v9.2" stroke="#a9d5ea" stroke-width="1.500"/><g transform="translate(656.4 93.6)">
<path d="M0.500 3.500l3.500-2.500l3 1.500v7l-3.500 1.500l-3-2.500z" fill="#7a7a7a"/>
<path d="M4.500 1.500l5-1.500l2 1.500v10l-4.500 1.500l-2.500-2.500z" fill="#8a8a8a"/>
<path d="M9.500 2.500l4.500-1.500c3.500 .5 6 3.500 6 7.500c0 3.500-1.500 6.500-4.500 7.500l-6-4z" fill="#808080"/>
<ellipse cx="15.600" cy="10.400" rx="3.800" ry="5.400" fill="#a4a4a4" transform="rotate(-18 15.600 10.400)"/>
<ellipse cx="15.800" cy="10.500" rx="2.400" ry="3.600" fill="#868686" transform="rotate(-18 15.800 10.500)"/>
</g><g transform="translate(658 123.6)">
<path d="M0.500 4l3-2l3.500 1v7l-3.500 1.500l-3-2z" fill="#8a8a8a"/>
<path d="M4 2.500c0-1.500 1-2 2-2.200l8-.3c1.500 0 2.500 1 2.500 2.500v10c0 1.500-.800 2.500-2 3l-7 1c-2 0-3.500-1-3.500-2.500z" fill="#7e7e7e"/>
<path d="M5.500 3.500c0-1 .500-1.500 1.500-1.700l7.500-.3v11.500l-8 1.500c-1 0-1.500-.500-1.500-1.500z" fill="#8c8c8c"/>
</g><g transform="translate(656 153.6)">
<path d="M0 10.500l15-9.500l3.500 1v3l-15 9.500l-3.500-1z" fill="#6e6e6e"/>
<path d="M0 10.500l15-9.500l3.500 1l-15 9.500z" fill="#8a8a8a"/>
</g><g transform="translate(667 205.6)">
<path d="M0.500 3.500l3-3l2.500 .3v2l3 .4v-2l3.500 .5l2 2.300v12l-3 1.800l-8.500-1.500l-2.500-2.300z" fill="#8a8a8a"/>
<path d="M0.500 3.500l3-3l2.500 .3v2l3 .4v-2l3.500 .5l2 2.300l-3 1.500l-8.500-1.200z" fill="#a2a2a2"/>
<path d="M11.500 5.500l3-1.500v12l-3 1.800z" fill="#6c6c6c"/>
<circle cx="4.500" cy="10.500" r="1.200" fill="#666"/>
</g><g transform="translate(665 237)">
<path d="M0.500 3.500l3.500-2.500l3.500 2v6l-3.500 1.500l-3.500-2.500z" fill="#868686"/>
<path d="M6 3l5-2c4.500 .5 8 4 8 8.500c0 3-1.500 5-4 5.500l-9-5z" fill="#808080"/>
<ellipse cx="15.300" cy="10.600" rx="3.500" ry="4.600" fill="#a6a6a6" transform="rotate(-20 15.300 10.600)"/>
<ellipse cx="15.400" cy="10.700" rx="2" ry="2.800" fill="#909090" transform="rotate(-20 15.400 10.700)"/>
</g><g transform="translate(664 265)">
<path d="M0.500 2.500l3.500-2l3.500 1.500v6.500l-3.500 1.500l-3.500-2.500z" fill="#8c8c8c"/>
<path d="M5 2.500l6-2c5 .5 9 4 9 8.500c0 3.500-1.500 5.500-4.500 6.500l-10.500-5z" fill="#7c7c7c"/>
<ellipse cx="15.800" cy="10.600" rx="3.700" ry="5" fill="#a8a8a8" transform="rotate(-20 15.800 10.600)"/>
<circle cx="9" cy="8" r="1" fill="#5c5c5c"/>
</g><g transform="translate(672 292.4)">
<path d="M6 6.500c1.500-4.500 6.500-7 11-5.500l3 3l-6.500 4.500l-2.500 6l-6 2.500z" fill="#9c9c9c"/>
<path d="M12 2.500c3-1.500 6-1 7.500 1.500l-5 3.500c-1.500-1.500-2.500-3-2.500-5z" fill="#c4c4c4"/>
<path d="M0.500 12l6.500-2l3 5l-5 4l-4.500-2z" fill="#9a7420"/>
<path d="M0.500 12l6.500-2l1 2l-6 3z" fill="#d4aa3c"/>
</g><g transform="translate(667 396)">
<path d="M0.500 3.500l3-3l2.500 .3v2l3 .4v-2l3.500 .5l2 2.300v12l-3 1.800l-8.500-1.500l-2.500-2.300z" fill="#8a8a8a"/>
<path d="M0.500 3.500l3-3l2.500 .3v2l3 .4v-2l3.500 .5l2 2.300l-3 1.500l-8.500-1.200z" fill="#a2a2a2"/>
<path d="M11.500 5.500l3-1.500v12l-3 1.800z" fill="#6c6c6c"/>
<circle cx="4.500" cy="10.500" r="1.200" fill="#666"/>
</g><g transform="translate(665 427)">
<path d="M0.500 3.500l3.500-2.500l3.500 2v6l-3.500 1.500l-3.500-2.500z" fill="#868686"/>
<path d="M6 3l5-2c4.500 .5 8 4 8 8.500c0 3-1.500 5-4 5.500l-9-5z" fill="#808080"/>
<ellipse cx="15.300" cy="10.600" rx="3.500" ry="4.600" fill="#a6a6a6" transform="rotate(-20 15.300 10.600)"/>
<ellipse cx="15.400" cy="10.700" rx="2" ry="2.800" fill="#909090" transform="rotate(-20 15.400 10.700)"/>
</g><g transform="translate(665 456)">
<path d="M0.500 3.500l3.500-2.500l3.500 2v6l-3.500 1.500l-3.500-2.500z" fill="#868686"/>
<path d="M6 3l5-2c4.500 .5 8 4 8 8.500c0 3-1.500 5-4 5.500l-9-5z" fill="#808080"/>
<ellipse cx="15.300" cy="10.600" rx="3.500" ry="4.600" fill="#a6a6a6" transform="rotate(-20 15.300 10.600)"/>
<ellipse cx="15.400" cy="10.700" rx="2" ry="2.800" fill="#909090" transform="rotate(-20 15.400 10.700)"/>
</g><path d="M729.500 304.500l4-1l1.500 1.500l-2.500 2.500l-3-1z" fill="#c09030"/></svg><div class="lnk" style="top:90.20px;font-size:6.2px;color:#86c4e3;left:681.00px;transform:scaleX(0.93);transform-origin:0 50%;">CLGR-HR0090</div><div style="top:100.60px;font-size:4.9px;color:#7c7c7c;left:681.00px;transform:scaleX(0.97);transform-origin:0 50%;">HSK-A100-CKB7-87 Adapt...</div><div class="lnk" style="top:119.60px;font-size:6.2px;color:#86c4e3;left:681.00px;transform:scaleX(0.93);transform-origin:0 50%;">CLGR-HR0091</div><div style="top:129.90px;font-size:4.9px;color:#7c7c7c;left:681.00px;transform:scaleX(0.97);transform-origin:0 50%;">Flansch CKB7-FK135 Serie...</div><div class="lnk" style="top:148.90px;font-size:6.2px;color:#86c4e3;left:681.00px;transform:scaleX(0.93);transform-origin:0 50%;">CLGR-P0459</div><div style="top:158.90px;font-size:4.9px;color:#7c7c7c;left:681.00px;transform:scaleX(0.97);transform-origin:0 50%;">Serie 317 Zwischensohle,...</div><div class="lnk" style="top:202.20px;font-size:6.2px;color:#86c4e3;left:688.80px;transform:scaleX(0.93);transform-origin:0 50%;">CLGR-P0460</div><div style="top:212.60px;font-size:4.9px;color:#7c7c7c;left:688.80px;transform:scaleX(0.97);transform-origin:0 50%;">Schieberkörper CK5/28</div><div class="lnk" style="top:231.60px;font-size:6.2px;color:#86c4e3;left:688.80px;transform:scaleX(0.93);transform-origin:0 50%;">CLGR-HR0340</div><div style="top:242.10px;font-size:4.9px;color:#7c7c7c;left:688.80px;transform:scaleX(0.97);transform-origin:0 50%;">Verlängerung CKB5-CKB5-...</div><div class="lnk" style="top:260.90px;font-size:6.2px;color:#86c4e3;left:688.80px;transform:scaleX(0.93);transform-origin:0 50%;">CLGR-HR0092</div><div style="top:270.90px;font-size:4.9px;color:#7c7c7c;left:688.80px;transform:scaleX(0.97);transform-origin:0 50%;">EWN Feinbohrkopf, Ver- u...</div><div class="lnk" style="top:289.20px;font-size:6.2px;color:#86c4e3;left:696.70px;transform:scaleX(0.93);transform-origin:0 50%;">CLGR-D0030</div><div style="top:297.60px;font-size:4.9px;color:#7c7c7c;left:696.70px;transform:scaleX(0.97);transform-origin:0 50%;">Wendeplattenhalter ENH5...</div><div class="lnk" style="top:393.20px;font-size:6.2px;color:#86c4e3;left:688.80px;transform:scaleX(0.93);transform-origin:0 50%;">CLGR-P0460</div><div style="top:403.60px;font-size:4.9px;color:#7c7c7c;left:688.80px;transform:scaleX(0.97);transform-origin:0 50%;">Schieberkörper CK5/28</div><div class="lnk" style="top:422.20px;font-size:6.2px;color:#86c4e3;left:688.80px;transform:scaleX(0.93);transform-origin:0 50%;">CLGR-HR0340</div><div style="top:432.30px;font-size:4.9px;color:#7c7c7c;left:688.80px;transform:scaleX(0.97);transform-origin:0 50%;">Verlängerung CKB5-CKB5-...</div><div class="lnk" style="top:451.20px;font-size:6.2px;color:#86c4e3;left:688.80px;transform:scaleX(0.93);transform-origin:0 50%;">CLGR-P0461</div><div style="top:461.30px;font-size:4.9px;color:#7c7c7c;left:688.80px;transform:scaleX(0.97);transform-origin:0 50%;">Füllstück CW-CK5-DM49-50</div><div style="top:304.20px;font-size:4.9px;color:#7c7c7c;left:696.70px;transform:scaleX(0.97);transform-origin:0 50%;">Wendeplatten:</div><div style="top:181.80px;font-size:4.9px;color:#222;left:654.30px;">1</div><div style="top:205.80px;font-size:4.9px;color:#222;left:654.30px;">2</div><div style="top:293.20px;font-size:4.9px;color:#222;left:662.40px;">1</div><div style="top:346.80px;font-size:4.9px;color:#222;left:662.40px;">2</div><div style="top:371.80px;font-size:4.9px;color:#222;left:654.30px;">3</div><div style="top:396.30px;font-size:4.9px;color:#222;left:654.30px;">4</div>
<div class="btn" style="left:641px;width:41.5px">Save</div>
<div class="btn" style="left:688.6px;width:41.5px">Save &amp; close</div>
<div class="btn" style="left:736px;width:41.5px">Cancel</div>
</div>
</body></html>
